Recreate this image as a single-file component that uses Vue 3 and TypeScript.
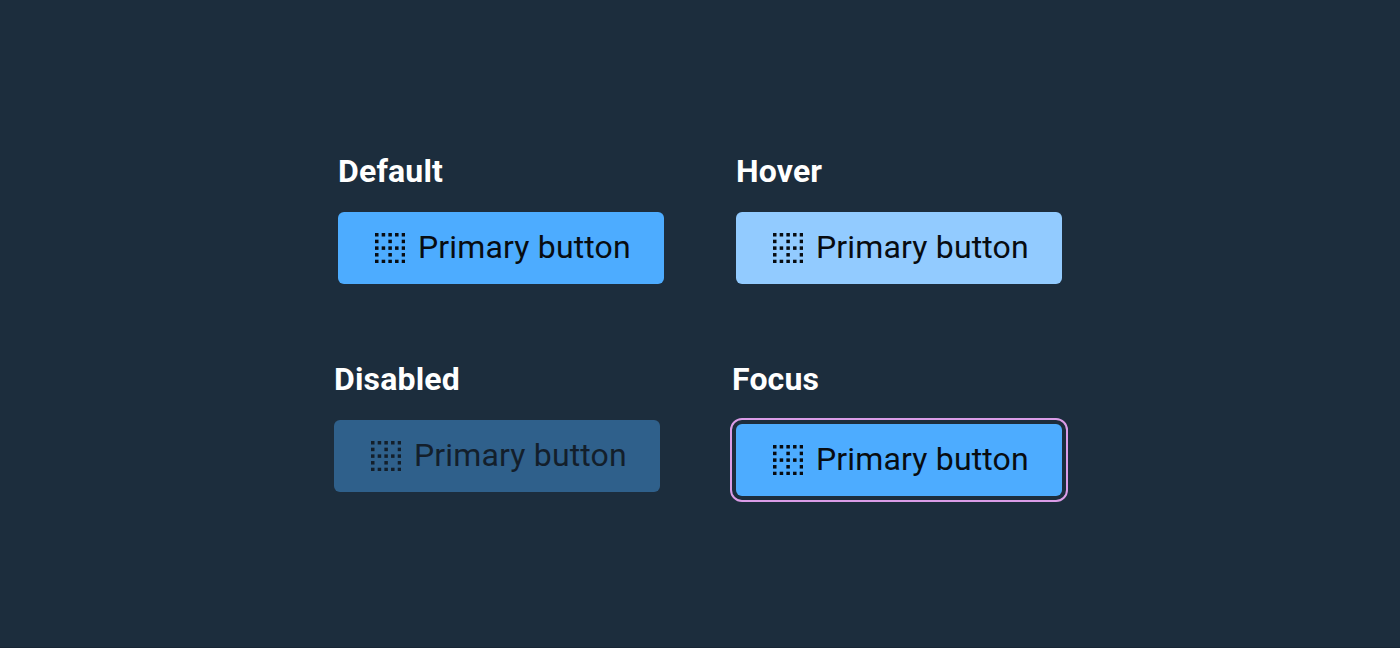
<script setup lang="ts">
interface ButtonState {
  label: string
  kind: string
}

const states: ButtonState[] = [
  { label: 'Default', kind: 'default' },
  { label: 'Hover', kind: 'hover' },
  { label: 'Disabled', kind: 'disabled' },
  { label: 'Focus', kind: 'focus' },
]

// Dots of the inner-border icon on a 5 x 5 lattice.
const dots: { x: number; y: number }[] = []
for (let y = 0; y < 5; y++) {
  for (let x = 0; x < 5; x++) {
    if (y % 2 === 0 || x % 2 === 0) dots.push({ x: x * 2, y: y * 2 })
  }
}
</script>

<template>
  <main class="board">
    <section v-for="state in states" :key="state.kind" class="cell" :class="state.kind">
      <h2 class="title">{{ state.label }}</h2>
      <button type="button" class="btn" :disabled="state.kind === 'disabled'">
        <svg class="icon" viewBox="0 0 9.1 9.1" aria-hidden="true">
          <rect v-for="d in dots" :key="`${d.x}-${d.y}`" :x="d.x" :y="d.y" width="1.05" height="1.05" />
        </svg>
        <span class="text">Primary button</span>
      </button>
    </section>
  </main>
</template>

<style>
body {
  margin: 0;
  background: #1c2d3d;
}
</style>

<style scoped>
.board {
  box-sizing: border-box;
  width: 1400px;
  height: 648px;
  padding: 147px 0 0 334px;
  display: grid;
  grid-template-columns: 398px 400px;
  grid-template-rows: 208px 200px;
  align-content: start;
  background: #1c2d3d;
  border-bottom: 1px solid #172635;
  font-family: Roboto, "Liberation Sans", sans-serif;
}
.cell {
  display: flex;
  flex-direction: column;
  align-items: flex-start;
  gap: 17px;
}
.default,
.hover {
  padding-left: 4px;
}
.title {
  margin: 0;
  height: 48px;
  font-size: 32px;
  line-height: 48px;
  font-weight: 700;
  letter-spacing: 0.16px;
  color: #fff;
}
.btn {
  box-sizing: border-box;
  width: 326px;
  height: 72px;
  margin: 0;
  padding: 0 0 0 37px;
  border: 0;
  border-radius: 6px;
  display: flex;
  align-items: center;
  gap: 12.6px;
  background: #4dacff;
  color: #080c11;
  font: 400 32px/48px Roboto, "Liberation Sans", sans-serif;
  letter-spacing: 0.16px;
}
.icon {
  flex: none;
  width: 30.4px;
  height: 30.4px;
  fill: currentColor;
}
.text {
  white-space: nowrap;
  padding-bottom: 2px;
}
.hover .btn {
  background: #92cbff;
}
.disabled .btn {
  opacity: 0.4;
}
.focus .btn {
  margin: 4px 0 0 4px;
  outline: 2px solid #da9ce7;
  outline-offset: 4px;
}
</style>
